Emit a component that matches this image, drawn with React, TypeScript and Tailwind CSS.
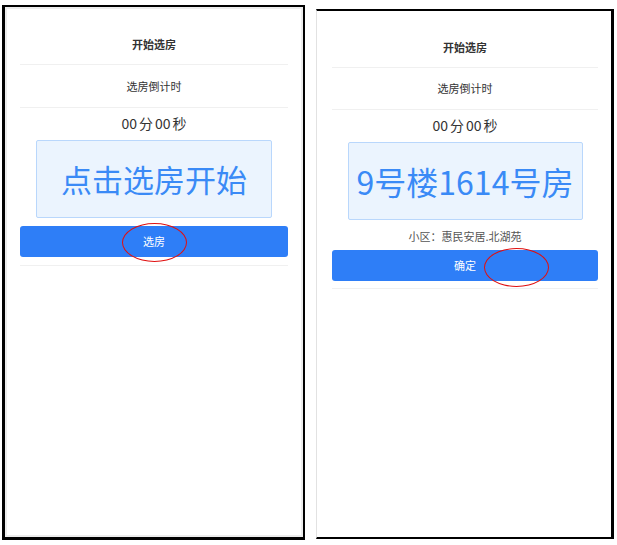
import React from "react";

const font = { fontFamily: '"Noto Sans CJK SC", "Noto Sans", sans-serif' };

function Countdown() {
  return (
    <div className="flex h-[30px] items-center justify-center text-[14px] text-[#333]">
      <span>00</span>
      <span className="mx-[2px]">分</span>
      <span>00</span>
      <span className="ml-[2px]">秒</span>
    </div>
  );
}

function Ellipse({ className }: { className: string }) {
  return (
    <div
      className={`pointer-events-none absolute h-[39px] w-[65px] rounded-[50%] border-[1.5px] border-[#e01010] ${className}`}
    />
  );
}

export default function App() {
  return (
    <div className="flex h-[545px] w-[617px] items-start bg-white" style={font}>
      {/* 左：开始选房 */}
      <div className="relative ml-[2px] mt-[5px] h-[535px] w-[303px] border-b-[3px] border-l-[3px] border-r-2 border-t-2 border-black">
        <div className="h-full border-2 border-[#ececec] px-[13px] pt-[16px]">
          <div className="flex h-[40px] items-center justify-center border-b border-[#f0f0f0] text-[11px] font-bold text-[#333]">
            开始选房
          </div>
          <div className="flex h-[43px] items-center justify-center border-b border-[#f0f0f0] text-[11px] text-[#333]">
            选房倒计时
          </div>
          <Countdown />
          <div className="mx-auto mt-[2px] flex h-[78px] w-[236px] items-center justify-center rounded-[2px] border border-[#b9d7fc] bg-[#ebf4fe] text-[31px] text-[#3a8af6]">
            点击选房开始
          </div>
          <div className="mt-[8px] border-b border-[#f0f0f0] pb-[8px]">
            <button className="flex h-[31px] w-full items-center justify-center rounded-[3px] bg-[#2e7ef7] text-[11px] text-white">
              选房
            </button>
          </div>
        </div>
        <Ellipse className="left-[117px] top-[216px]" />
      </div>

      {/* 右：选房结果 */}
      <div className="relative ml-[11px] mt-[9px] h-[530px] w-[298px] border-b-2 border-l border-r-[3px] border-t-2 border-b-black border-l-[#e2e2e2] border-r-black border-t-black">
        <div className="h-full pl-[15px] pr-[13px] pt-[17px]">
          <div className="flex h-[40px] items-center justify-center border-b border-[#f0f0f0] text-[11px] font-bold text-[#333]">
            开始选房
          </div>
          <div className="flex h-[42px] items-center justify-center border-b border-[#f0f0f0] text-[11px] text-[#333]">
            选房倒计时
          </div>
          <Countdown />
          <div className="mx-auto mt-[2px] flex h-[78px] w-[235px] items-center justify-center rounded-[2px] border border-[#b9d7fc] bg-[#ebf4fe] text-[32px] text-[#3a8af6]">
            9号楼1614号房
          </div>
          <div className="mt-[4px] flex h-[24px] items-center justify-center text-[11px] text-[#555]">
            小区：惠民安居.北湖苑
          </div>
          <div className="mt-[2px] border-b border-[#f0f0f0] pb-[7px]">
            <button className="flex h-[31px] w-full items-center justify-center rounded-[3px] bg-[#2e7ef7] text-[11px] text-white">
              确定
            </button>
          </div>
        </div>
        <Ellipse className="left-[167px] top-[237px]" />
      </div>
    </div>
  );
}
